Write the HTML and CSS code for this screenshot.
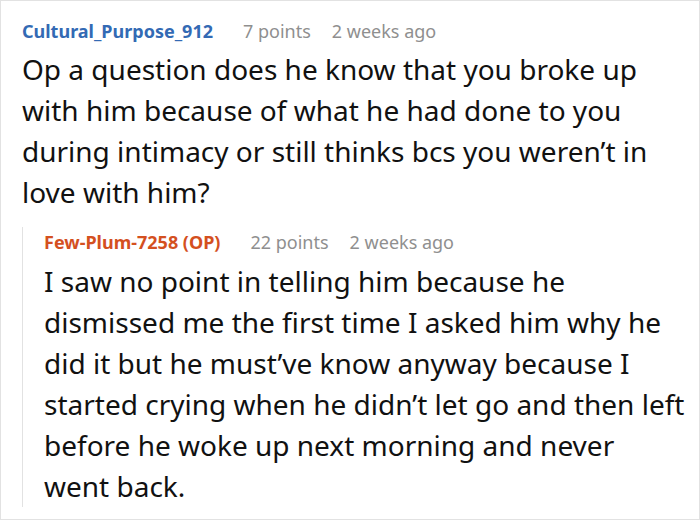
FILE: index.html
```html
<!DOCTYPE html>
<html>
<head>
<meta charset="utf-8">
<link rel="stylesheet" href="styles.css">
</head>
<body>
<div class="page">
  <div class="comment">
    <div class="meta">
      <span class="author">Cultural_Purpose_912</span>
      <span class="info">7 points</span>
      <span class="info">2 weeks ago</span>
    </div>
    <p class="body">Op a question does he know that you broke up with him because of what he had done to you during intimacy or still thinks bcs you weren’t in love with him?</p>
    <div class="reply">
      <div class="meta">
        <span class="author op">Few-Plum-7258 (OP)</span>
        <span class="info">22 points</span>
        <span class="info">2 weeks ago</span>
      </div>
      <p class="body">I saw no point in telling him because he dismissed me the first time I asked him why he did it but he must’ve know anyway because I started crying when he didn’t let go and then left before he woke up next morning and never went back.</p>
    </div>
  </div>
</div>
</body>
</html>
```

FILE: styles.css
```css
html, body {
  margin: 0;
  padding: 0;
  background: #fff;
}
.page {
  width: 700px;
  height: 520px;
  box-sizing: border-box;
  border: 1px solid #e2e2e2;
  font-family: "Noto Sans", sans-serif;
  overflow: hidden;
}
.comment {
  padding: 15px 14px 0 21px;
}
.meta {
  display: flex;
  align-items: baseline;
  gap: 21px;
  font-size: 18px;
  line-height: 30px;
}
.author {
  font-weight: bold;
  color: #336ab4;
  margin-right: 9px;
}
.author.op {
  color: #d4501f;
}
.info {
  color: #8f8f8f;
}
.body {
  margin: 3px 0 0;
  font-size: 28px;
  line-height: 41px;
  color: #111;
}
.reply {
  margin-top: 14px;
  border-left: 1px solid #e2e2e2;
  padding-left: 21px;
}
.reply .body {
  margin-top: 4px;
}
```
